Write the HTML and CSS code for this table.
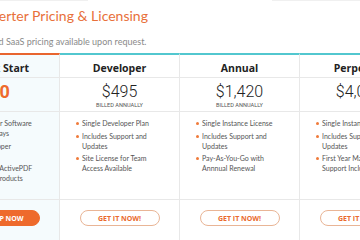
FILE: index.html
```html
<!DOCTYPE html>
<html>
<head>
<meta charset="utf-8">
<link rel="stylesheet" href="styles.css">
</head>
<body>
<div class="topline"><span class="seg seg-left"></span><span class="seg seg-right"></span></div>
<h1 class="title">Converter Pricing &amp; Licensing</h1>
<p class="subtitle">OEM and SaaS pricing available upon request.</p>
<div class="table">
  <div class="col col-free">
    <div class="head">Quick Start</div>
    <div class="price-row"><div class="price price-free">$0</div><div class="billed">&nbsp;</div></div>
    <ul class="features features-free">
      <li>Full Converter Software<br>Trial for 30 Days</li>
      <li>Single Developer<br>License</li>
      <li>Access to All ActivePDF<br>Conversion Products</li>
    </ul>
    <div class="action"><a class="btn btn-fill">SIGN UP NOW</a></div>
  </div>
  <div class="col">
    <div class="head">Developer</div>
    <div class="price-row"><div class="price">$495</div><div class="billed">BILLED ANNUALLY</div></div>
    <ul class="features">
      <li>Single Developer Plan</li>
      <li>Includes Support and Updates</li>
      <li>Site License for Team Access Available</li>
    </ul>
    <div class="action"><a class="btn">GET IT NOW!</a></div>
  </div>
  <div class="col">
    <div class="head">Annual</div>
    <div class="price-row"><div class="price">$1,420</div><div class="billed">BILLED ANNUALLY</div></div>
    <ul class="features">
      <li>Single Instance License</li>
      <li>Includes Support and Updates</li>
      <li>Pay-As-You-Go with Annnual Renewal</li>
    </ul>
    <div class="action"><a class="btn">GET IT NOW!</a></div>
  </div>
  <div class="col">
    <div class="head">Perpetual</div>
    <div class="price-row"><div class="price">$4,050</div><div class="billed">&nbsp;</div></div>
    <ul class="features">
      <li>Single Instance License</li>
      <li>Includes Support and Updates</li>
      <li>First Year Maintenance Support Included</li>
    </ul>
    <div class="action"><a class="btn">GET IT NOW!</a></div>
  </div>
</div>
</body>
</html>
```
FILE: styles.css
```css
html, body {
  margin: 0;
  padding: 0;
  background: #fff;
}
body {
  width: 360px;
  height: 240px;
  overflow: hidden;
  font-family: Lato, "Open Sans", sans-serif;
}
.topline {
  display: flex;
  justify-content: space-between;
  height: 1px;
}
.seg {
  display: block;
  height: 1px;
  background: #f0f0f0;
}
.seg-left { width: 88px; }
.seg-right { width: 88px; }
.title {
  margin: 6px 0 0 -33px;
  font-size: 14px;
  line-height: 17px;
  font-weight: 400;
  color: #e8703a;
  white-space: nowrap;
}
.subtitle {
  margin: 12px 0 0 -34px;
  font-size: 9px;
  line-height: 12px;
  color: #8a8a8a;
  white-space: nowrap;
}
.table {
  margin: 5px 0 0 -60px;
  display: grid;
  grid-template-columns: repeat(4, 120px);
}
.col {
  border-top: 2px solid #52c7cf;
  border-right: 1px solid #e8e8e8;
  height: 190px;
  display: flex;
  flex-direction: column;
}
.col-free {
  border-top-color: #e8652f;
  background: #f5fbfd;
}
.head {
  height: 19px;
  padding-top: 3px;
  line-height: 20px;
  text-align: center;
  font-family: "Open Sans", sans-serif;
  font-weight: 700;
  font-size: 10.5px;
  color: #222;
  border-bottom: 1px solid #e8e8e8;
}
.price-row {
  box-sizing: border-box;
  height: 34px;
  padding-top: 5px;
  border-bottom: 1px solid #e8e8e8;
  text-align: center;
}
.price {
  font-family: Roboto, sans-serif;
  font-weight: 300;
  font-size: 16px;
  line-height: 18px;
  color: #222;
}
.price-free {
  font-weight: 700;
  font-size: 18px;
  color: #ee6a2c;
}
.billed {
  margin-top: 1px;
  font-family: Roboto, sans-serif;
  font-size: 5.6px;
  line-height: 7px;
  color: #555;
}
.features {
  list-style: none;
  margin: 0;
  padding: 6px 14px 0 16px;
  height: 88px;
  box-sizing: border-box;
  border-bottom: 1px solid #e8e8e8;
}
.features-free {
  padding-left: 13px;
}
.features li {
  display: flex;
  font-size: 7px;
  line-height: 10px;
  color: #555;
  margin-bottom: 2.5px;
}
.features li::before {
  content: "";
  flex: none;
  width: 3px;
  height: 3px;
  border-radius: 50%;
  background: #f07a3a;
  margin: 4px 3px 0 0;
}
.features-free li {
  display: block;
  padding-left: 6px;
}
.features-free li::before {
  display: inline-block;
  vertical-align: 1px;
  margin: 0 3px 0 -6px;
}
.action {
  display: flex;
  justify-content: center;
  padding-top: 10px;
}
.btn {
  display: flex;
  align-items: center;
  justify-content: center;
  width: 80px;
  height: 16px;
  box-sizing: border-box;
  border: 1px solid #e9b596;
  border-radius: 9px;
  font-family: "Open Sans", sans-serif;
  font-weight: 700;
  font-size: 7px;
  color: #ea6a2e;
}
.btn-fill {
  background: #ee6a2c;
  border-color: #ee6a2c;
  color: #fff;
}
```
